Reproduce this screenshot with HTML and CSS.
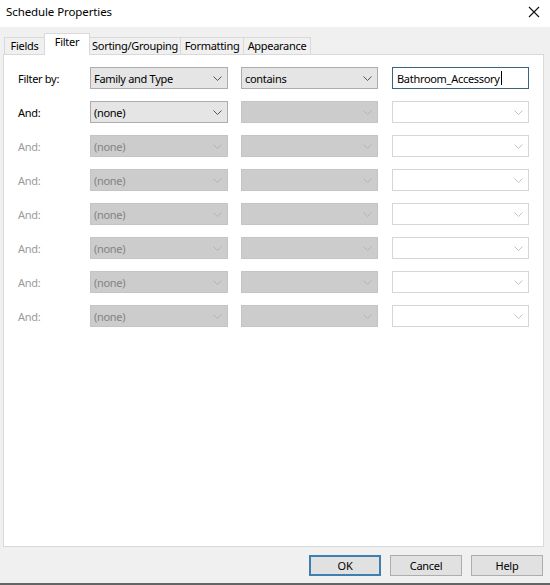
FILE: index.html
```html
<!DOCTYPE html>
<html>
<head>
<meta charset="utf-8">
<link rel="stylesheet" href="styles.css">
</head>
<body>
<div class="window">
  <div class="titlebar">
    <span class="title">Schedule Properties</span>
    <svg class="close" width="12" height="12" viewBox="0 0 12 12"><path d="M1 1L11 11M11 1L1 11" stroke="#111" stroke-width="1.1" fill="none"/></svg>
  </div>
  <div class="client">
    <div class="tabs">
      <div class="tab t-fields">Fields</div>
      <div class="tab active t-filter">Filter</div>
      <div class="tab t-sort">Sorting/Grouping</div>
      <div class="tab t-format">Formatting</div>
      <div class="tab t-appear">Appearance</div>
    </div>
    <div class="panel">
      <div class="grid">
        <div class="label">Filter by:</div>
        <div class="combo on"><span>Family and Type</span><svg class="chev" width="9" height="5" viewBox="0 0 9 5"><path d="M0.5 0.5L4.5 4.5L8.5 0.5" stroke="#555" fill="none"/></svg></div>
        <div class="combo on"><span>contains</span><svg class="chev" width="9" height="5" viewBox="0 0 9 5"><path d="M0.5 0.5L4.5 4.5L8.5 0.5" stroke="#555" fill="none"/></svg></div>
        <div class="input focus"><span>Bathroom_Accessory</span><span class="caret"></span></div>

        <div class="label">And:</div>
        <div class="combo on"><span>(none)</span><svg class="chev" width="9" height="5" viewBox="0 0 9 5"><path d="M0.5 0.5L4.5 4.5L8.5 0.5" stroke="#555" fill="none"/></svg></div>
        <div class="combo off"><span></span><svg class="chev" width="9" height="5" viewBox="0 0 9 5"><path d="M0.5 0.5L4.5 4.5L8.5 0.5" stroke="#b4b4b4" fill="none"/></svg></div>
        <div class="input blank"><span></span><svg class="chev" width="9" height="5" viewBox="0 0 9 5"><path d="M0.5 0.5L4.5 4.5L8.5 0.5" stroke="#c4c4c4" fill="none"/></svg></div>

        <div class="label dim">And:</div>
        <div class="combo off"><span>(none)</span><svg class="chev" width="9" height="5" viewBox="0 0 9 5"><path d="M0.5 0.5L4.5 4.5L8.5 0.5" stroke="#b4b4b4" fill="none"/></svg></div>
        <div class="combo off"><span></span><svg class="chev" width="9" height="5" viewBox="0 0 9 5"><path d="M0.5 0.5L4.5 4.5L8.5 0.5" stroke="#b4b4b4" fill="none"/></svg></div>
        <div class="input blank"><span></span><svg class="chev" width="9" height="5" viewBox="0 0 9 5"><path d="M0.5 0.5L4.5 4.5L8.5 0.5" stroke="#c4c4c4" fill="none"/></svg></div>

        <div class="label dim">And:</div>
        <div class="combo off"><span>(none)</span><svg class="chev" width="9" height="5" viewBox="0 0 9 5"><path d="M0.5 0.5L4.5 4.5L8.5 0.5" stroke="#b4b4b4" fill="none"/></svg></div>
        <div class="combo off"><span></span><svg class="chev" width="9" height="5" viewBox="0 0 9 5"><path d="M0.5 0.5L4.5 4.5L8.5 0.5" stroke="#b4b4b4" fill="none"/></svg></div>
        <div class="input blank"><span></span><svg class="chev" width="9" height="5" viewBox="0 0 9 5"><path d="M0.5 0.5L4.5 4.5L8.5 0.5" stroke="#c4c4c4" fill="none"/></svg></div>

        <div class="label dim">And:</div>
        <div class="combo off"><span>(none)</span><svg class="chev" width="9" height="5" viewBox="0 0 9 5"><path d="M0.5 0.5L4.5 4.5L8.5 0.5" stroke="#b4b4b4" fill="none"/></svg></div>
        <div class="combo off"><span></span><svg class="chev" width="9" height="5" viewBox="0 0 9 5"><path d="M0.5 0.5L4.5 4.5L8.5 0.5" stroke="#b4b4b4" fill="none"/></svg></div>
        <div class="input blank"><span></span><svg class="chev" width="9" height="5" viewBox="0 0 9 5"><path d="M0.5 0.5L4.5 4.5L8.5 0.5" stroke="#c4c4c4" fill="none"/></svg></div>

        <div class="label dim">And:</div>
        <div class="combo off"><span>(none)</span><svg class="chev" width="9" height="5" viewBox="0 0 9 5"><path d="M0.5 0.5L4.5 4.5L8.5 0.5" stroke="#b4b4b4" fill="none"/></svg></div>
        <div class="combo off"><span></span><svg class="chev" width="9" height="5" viewBox="0 0 9 5"><path d="M0.5 0.5L4.5 4.5L8.5 0.5" stroke="#b4b4b4" fill="none"/></svg></div>
        <div class="input blank"><span></span><svg class="chev" width="9" height="5" viewBox="0 0 9 5"><path d="M0.5 0.5L4.5 4.5L8.5 0.5" stroke="#c4c4c4" fill="none"/></svg></div>

        <div class="label dim">And:</div>
        <div class="combo off"><span>(none)</span><svg class="chev" width="9" height="5" viewBox="0 0 9 5"><path d="M0.5 0.5L4.5 4.5L8.5 0.5" stroke="#b4b4b4" fill="none"/></svg></div>
        <div class="combo off"><span></span><svg class="chev" width="9" height="5" viewBox="0 0 9 5"><path d="M0.5 0.5L4.5 4.5L8.5 0.5" stroke="#b4b4b4" fill="none"/></svg></div>
        <div class="input blank"><span></span><svg class="chev" width="9" height="5" viewBox="0 0 9 5"><path d="M0.5 0.5L4.5 4.5L8.5 0.5" stroke="#c4c4c4" fill="none"/></svg></div>

        <div class="label dim">And:</div>
        <div class="combo off"><span>(none)</span><svg class="chev" width="9" height="5" viewBox="0 0 9 5"><path d="M0.5 0.5L4.5 4.5L8.5 0.5" stroke="#b4b4b4" fill="none"/></svg></div>
        <div class="combo off"><span></span><svg class="chev" width="9" height="5" viewBox="0 0 9 5"><path d="M0.5 0.5L4.5 4.5L8.5 0.5" stroke="#b4b4b4" fill="none"/></svg></div>
        <div class="input blank"><span></span><svg class="chev" width="9" height="5" viewBox="0 0 9 5"><path d="M0.5 0.5L4.5 4.5L8.5 0.5" stroke="#c4c4c4" fill="none"/></svg></div>
      </div>
    </div>
    <div class="footer">
      <div class="btn default">OK</div>
      <div class="btn">Cancel</div>
      <div class="btn">Help</div>
    </div>
  </div>
</div>
</body>
</html>
```
FILE: styles.css
```css
html, body {
  margin: 0;
  padding: 0;
}
body {
  width: 550px;
  height: 585px;
  overflow: hidden;
  font-family: "Noto Sans", "Open Sans", sans-serif;
  font-size: 11px;
  letter-spacing: -0.3px;
  color: #000;
}
.window {
  width: 550px;
  height: 585px;
  display: flex;
  flex-direction: column;
  box-sizing: border-box;
  border-bottom: 2px solid #646464;
  background: #f0f0f0;
}
.titlebar {
  height: 27px;
  flex: none;
  background: #fff;
  display: flex;
  align-items: center;
  justify-content: space-between;
  padding: 0 10px 0 6px;
}
.title {
  font-size: 11.5px;
  letter-spacing: -0.1px;
  margin-top: -4px;
}
.close {
  margin-top: -3px;
}
.client {
  flex: 1;
  display: flex;
  flex-direction: column;
  padding: 0 6px 0 3px;
}
.tabs {
  height: 27px;
  flex: none;
  display: flex;
  align-items: flex-end;
  position: relative;
  z-index: 1;
  padding-left: 1px;
}
.tab {
  height: 17px;
  box-sizing: border-box;
  border: 1px solid #d9d9d9;
  border-bottom: none;
  line-height: 15px;
  background: #f0f0f0;
  white-space: nowrap;
  text-align: center;
}
.t-fields { width: 41px; }
.t-filter { width: 46px; }
.t-sort { width: 92px; }
.t-format { width: 64px; margin-left: -1px; }
.t-appear { width: 68px; margin-left: -1px; }
.tab.active {
  height: 22px;
  margin-bottom: -1px;
  margin-left: -1px;
  margin-right: -1px;
  background: #fff;
  line-height: 16px;
  position: relative;
  z-index: 2;
}
.panel {
  height: 493px;
  box-sizing: border-box;
  border: 1px solid #d9d9d9;
  background: #fff;
  padding: 12px 0 0 14px;
}
.grid {
  display: grid;
  grid-template-columns: 59px 138px 137px 138px;
  column-gap: 13px;
  row-gap: 12px;
  grid-auto-rows: 22px;
}
.label {
  display: flex;
  align-items: center;
}
.label.dim {
  color: #9a9a9a;
}
.combo, .input {
  box-sizing: border-box;
  display: flex;
  align-items: center;
  justify-content: space-between;
  padding: 0 5px 0 3px;
  white-space: nowrap;
}
.combo.on {
  background: #e5e5e5;
  border: 1px solid #adadad;
}
.combo.off {
  background: #cccccc;
  border: 1px solid #c4c4c4;
  color: #838383;
}
.input {
  margin-left: 1px;
  background: #fff;
}
.input.focus {
  border: 1px solid #3a6382;
  justify-content: flex-start;
  padding-left: 4px;
}
.input.blank {
  border: 1px solid #d6d6d6;
}
.caret {
  width: 1px;
  height: 14px;
  background: #000;
  margin-left: 1px;
}
.chev {
  flex: none;
}
.footer {
  flex: 1;
  display: flex;
  justify-content: flex-end;
  align-items: flex-start;
  padding-top: 8px;
  gap: 9px;
  padding-right: 1px;
}
.btn {
  width: 72px;
  height: 21px;
  box-sizing: border-box;
  border: 1px solid #adadad;
  background: #e1e1e1;
  display: flex;
  align-items: center;
  justify-content: center;
}
.btn.default {
  border: 2px solid #3e7fb0;
}
```
